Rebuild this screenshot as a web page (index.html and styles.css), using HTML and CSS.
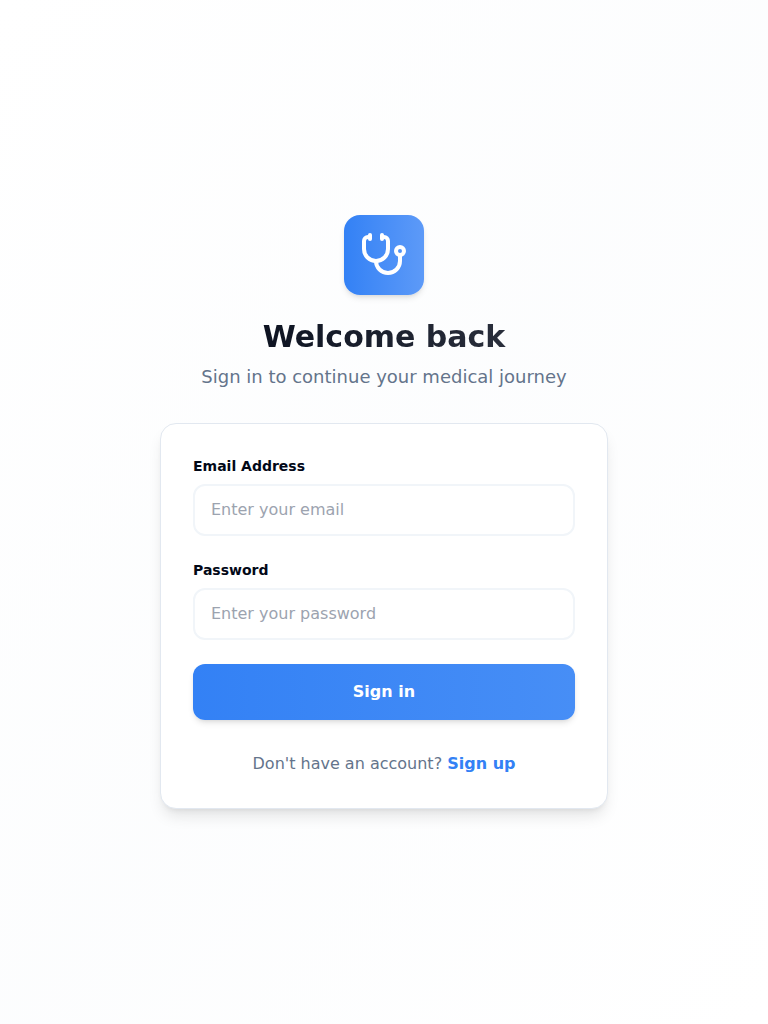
FILE: index.html
```html
<!DOCTYPE html>
<html lang="en">
<head>
<meta charset="UTF-8">
<title>Sign in</title>
<link rel="stylesheet" href="styles.css">
</head>
<body>
<main class="page">
  <div class="wrap">
    <header class="header">
      <div class="logo">
        <svg class="logo-icon" viewBox="0 0 24 24" fill="none" stroke="currentColor" stroke-width="2" stroke-linecap="round" stroke-linejoin="round"><path d="M11 2v2"/><path d="M5 2v2"/><path d="M5 3H4a2 2 0 0 0-2 2v4a6 6 0 0 0 12 0V5a2 2 0 0 0-2-2h-1"/><path d="M8 15a6 6 0 0 0 12 0v-3"/><circle cx="20" cy="10" r="2"/></svg>
      </div>
      <h1 class="title">Welcome back</h1>
      <p class="subtitle">Sign in to continue your medical journey</p>
    </header>
    <section class="card">
      <form class="form">
        <div class="field">
          <label class="label" for="email">Email Address</label>
          <input class="input" id="email" type="email" placeholder="Enter your email">
        </div>
        <div class="field">
          <label class="label" for="password">Password</label>
          <input class="input" id="password" type="password" placeholder="Enter your password">
        </div>
        <button class="button" type="button">Sign in</button>
      </form>
      <p class="footer">Don't have an account? <a class="link" href="#">Sign up</a></p>
    </section>
  </div>
</main>
</body>
</html>
```
FILE: styles.css
```css
*, *::before, *::after { box-sizing: border-box; }
body {
  margin: 0;
  font-family: "DejaVu Sans", sans-serif;
  font-size: 16px;
  line-height: 24px;
  color: #020817;
}
h1, p { margin: 0; }
.page {
  min-height: 100vh;
  display: flex;
  align-items: center;
  justify-content: center;
  padding: 16px;
  background: linear-gradient(to bottom right, #ffffff, rgba(241, 245, 249, .2), #ffffff);
}
.wrap { width: 448px; }
.header { text-align: center; margin-bottom: 32px; }
.logo {
  width: 80px;
  height: 80px;
  margin: 0 auto 24px;
  display: flex;
  align-items: center;
  justify-content: center;
  border-radius: 16px;
  color: #fff;
  background: linear-gradient(90deg, #3381f5, #5d9af8);
  box-shadow: 0 4px 6px -1px rgba(0, 0, 0, .1), 0 2px 4px -2px rgba(0, 0, 0, .1);
}
.logo-icon { width: 48px; height: 48px; }
.title {
  margin-bottom: 8px;
  font-size: 30px;
  line-height: 36px;
  font-weight: 700;
  color: transparent;
  background: linear-gradient(90deg, #020817, rgba(2, 8, 23, .8));
  -webkit-background-clip: text;
  background-clip: text;
}
.subtitle { font-size: 18px; line-height: 28px; color: #64748b; }
.card {
  padding: 32px;
  border: 1px solid #e2e8f0;
  border-radius: 16px;
  background: #fff;
  box-shadow: 0 10px 15px -3px rgba(0, 0, 0, .1), 0 4px 6px -4px rgba(0, 0, 0, .1);
}
.form { display: flex; flex-direction: column; gap: 24px; }
.field { display: flex; flex-direction: column; gap: 8px; }
.label { font-size: 14px; line-height: 20px; font-weight: 600; }
.input {
  width: 100%;
  height: 52px;
  padding: 11px 16px 13px;
  border: 2px solid #f1f5f9;
  border-radius: 12px;
  background: #fff;
  font: inherit;
  outline: none;
}
.input::placeholder { color: #9ca3af; opacity: 1; }
.button {
  height: 56px;
  border: 0;
  border-radius: 12px;
  color: #fff;
  font: inherit;
  font-weight: 600;
  background: linear-gradient(90deg, #3381f5, #478ef6);
  box-shadow: 0 4px 6px -1px rgba(0, 0, 0, .1), 0 2px 4px -2px rgba(0, 0, 0, .1);
}
.footer { margin-top: 32px; text-align: center; color: #64748b; }
.link { color: #3381f5; font-weight: 600; text-decoration: none; }
```
